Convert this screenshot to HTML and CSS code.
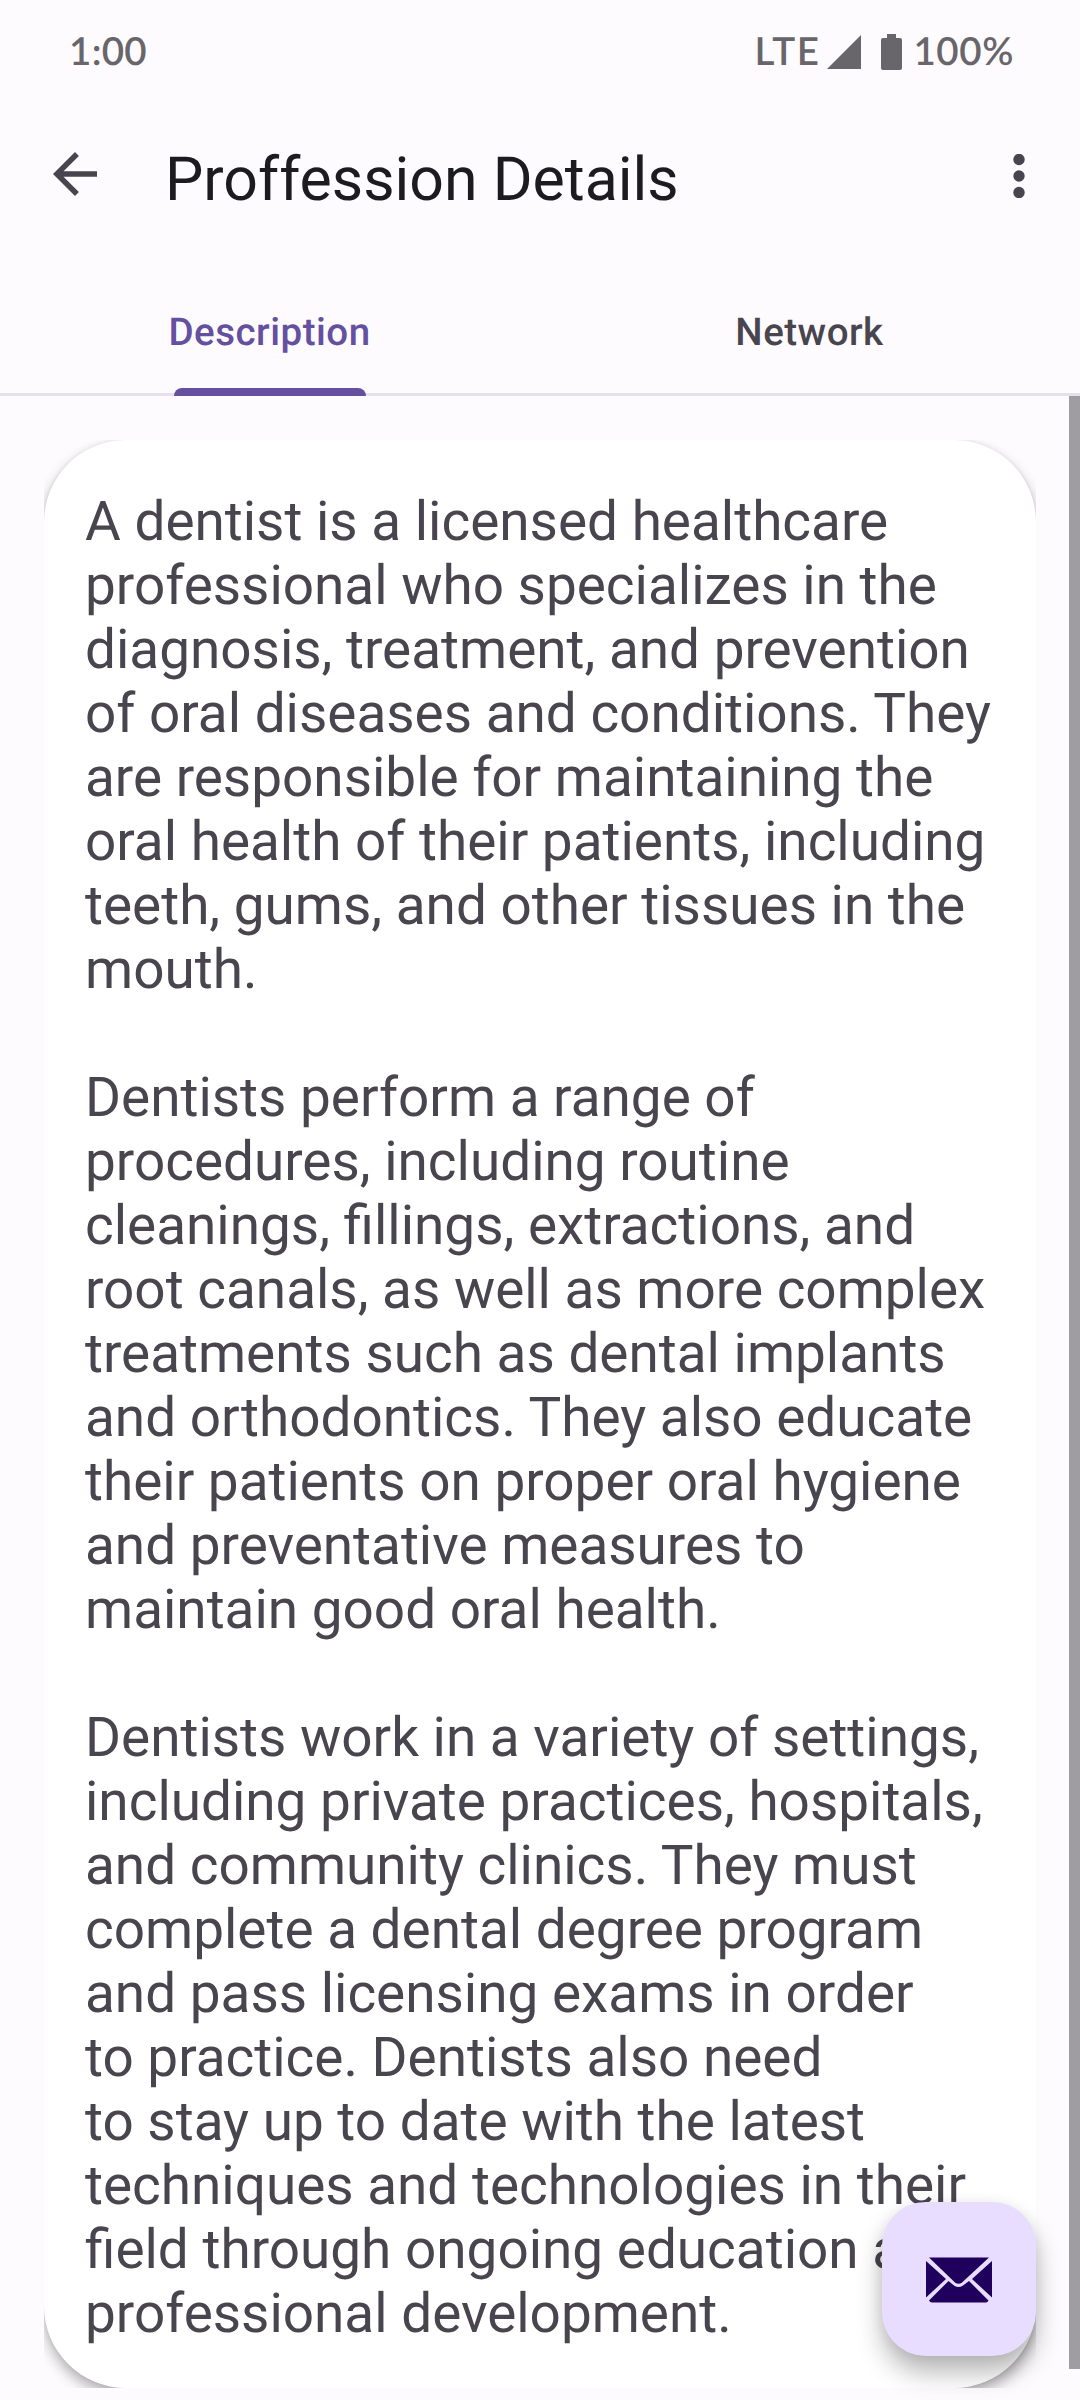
FILE: index.html
```html
<!DOCTYPE html>
<html lang="en">
<head>
<meta charset="utf-8">
<title>Proffession Details</title>
<link rel="stylesheet" href="styles.css">
</head>
<body>
<div class="screen">
  <div class="status-bar">
    <span class="clock">1:00</span>
    <div class="indicators">
      <span class="network-type">LTE</span>
      <svg class="signal" viewBox="0 0 34 34"><path d="M34 0V34H0Z"/></svg>
      <svg class="battery" viewBox="0 0 21 36"><path d="M6 0h9v4h4a2 2 0 0 1 2 2v28a2 2 0 0 1-2 2H2a2 2 0 0 1-2-2V6a2 2 0 0 1 2-2h4z"/></svg>
      <span class="charge">100%</span>
    </div>
  </div>
  <header class="app-bar">
    <svg class="back" viewBox="4 4 16 16"><path d="M20 11H7.83l5.59-5.59L12 4l-8 8 8 8 1.41-1.41L7.83 13H20v-2z"/></svg>
    <h1 class="title">Proffession Details</h1>
    <svg class="more" viewBox="0 0 12 44"><circle cx="6" cy="5.5" r="5.7"/><circle cx="6" cy="22" r="5.7"/><circle cx="6" cy="38.5" r="5.7"/></svg>
  </header>
  <nav class="tabs">
    <div class="tab tab-active">Description</div>
    <div class="tab">Network</div>
  </nav>
  <main class="content">
    <div class="card-frame">
      <article class="card">
        <p>A dentist is a licensed healthcare
professional who specializes in the
diagnosis, treatment, and prevention
of oral diseases and conditions. They
are responsible for maintaining the
oral health of their patients, including
teeth, gums, and other tissues in the
mouth.</p>
        <p>Dentists perform a range of
procedures, including routine
cleanings, fillings, extractions, and
root canals, as well as more complex
treatments such as dental implants
and orthodontics. They also educate
their patients on proper oral hygiene
and preventative measures to
maintain good oral health.</p>
        <p>Dentists work in a variety of settings,
including private practices, hospitals,
and community clinics. They must
complete a dental degree program
and pass licensing exams in order
to practice. Dentists also need
to stay up to date with the latest
techniques and technologies in their
field through ongoing education and
professional development.</p>
      </article>
    </div>
    <div class="scrollbar"></div>
  </main>
  <div class="fab">
    <svg class="mail" viewBox="0 0 66 46">
      <path d="M3 .5H63L36 25.5Q32.500 28 29 25.500Z"/>
      <path d="M0 4L20 22 0 40.500Z"/>
      <path d="M66 4V40.500L46 22Z"/>
      <path d="M22.500 24L28 28.500Q32.500 31.500 37 28.500L43 24 62.500 43.500Q61.500 45.500 60 45.500H6Q4 45.500 3 43.500Z"/>
    </svg>
  </div>
</div>
</body>
</html>
```
FILE: styles.css
```css
* {
  box-sizing: border-box;
}

body {
  margin: 0;
  background: #fefbff;
  font-family: Roboto, sans-serif;
  color: #49454f;
  text-rendering: geometricPrecision;
}

svg {
  display: block;
  flex: none;
}

.screen {
  position: relative;
  display: flex;
  flex-direction: column;
  width: 1080px;
  height: 2400px;
  overflow: hidden;
}

.status-bar {
  display: flex;
  flex: none;
  justify-content: space-between;
  height: 102px;
  padding: 28px 66px 0 69px;
  font: 600 38.500px/46px Lato, sans-serif;
  color: #68666a;
}

.status-bar svg {
  fill: #68666a;
}

.clock {
  letter-spacing: .3px;
}

.indicators {
  display: flex;
}

.network-type {
  margin-right: 7px;
  letter-spacing: 1.500px;
}

.signal {
  width: 34px;
  height: 34px;
  margin: 7px 20px 0 0;
}

.battery {
  width: 21px;
  height: 36px;
  margin: 6px 11px 0 0;
}

.charge {
  letter-spacing: .6px;
}

.app-bar {
  display: flex;
  flex: none;
  height: 162px;
  padding: 0 55px 0 53px;
}

.back {
  width: 44px;
  height: 44px;
  margin-top: 50px;
  fill: #49454f;
}

.title {
  flex: 1;
  margin: 42px 0 0 68px;
  font-size: 60.800px;
  font-weight: 400;
  line-height: 72px;
  color: #1c1b1f;
}

.more {
  width: 12px;
  height: 44px;
  margin-top: 52px;
  fill: #49454f;
}

.tabs {
  display: flex;
  flex: none;
  height: 132px;
  border-bottom: 3px solid #e4e0ec;
}

.tab {
  position: relative;
  flex: 1;
  padding: 46px 1px 0 0;
  font-size: 38.500px;
  font-weight: 500;
  line-height: 46px;
  letter-spacing: .5px;
  text-align: center;
}

.tab-active {
  color: #64509f;
}

.tab-active::after {
  content: "";
  position: absolute;
  bottom: -3px;
  left: 174px;
  width: 192px;
  height: 8px;
  border-radius: 8px 8px 0 0;
  background: #64509f;
}

.content {
  position: relative;
  flex: 1;
  min-height: 0;
  padding: 44px;
}

.card-frame {
  height: 1948px;
  overflow: hidden;
}

.card {
  height: 100%;
  padding: 50px 0 0 41px;
  border-radius: 82px;
  background: #fff;
  box-shadow: 0 7px 14px rgba(0, 0, 0, .3), 0 0 4px rgba(0, 0, 0, .08);
  font-size: 54.900px;
  line-height: 64px;
}

.card p {
  margin: 0 0 64px;
  white-space: pre;
}

.scrollbar {
  position: absolute;
  top: 0;
  right: 0;
  width: 11px;
  height: 1973px;
  background: #9f9da2;
}

.fab {
  position: absolute;
  top: 2202px;
  left: 882px;
  display: flex;
  align-items: center;
  justify-content: center;
  width: 154px;
  height: 154px;
  border-radius: 44px;
  background: #e8ddff;
  box-shadow: 0 17px 26px rgba(0, 0, 0, .27), 0 2px 14px rgba(0, 0, 0, .08);
}

.mail {
  width: 66px;
  height: 46px;
  margin-top: 1px;
  fill: #1f005c;
}
```
